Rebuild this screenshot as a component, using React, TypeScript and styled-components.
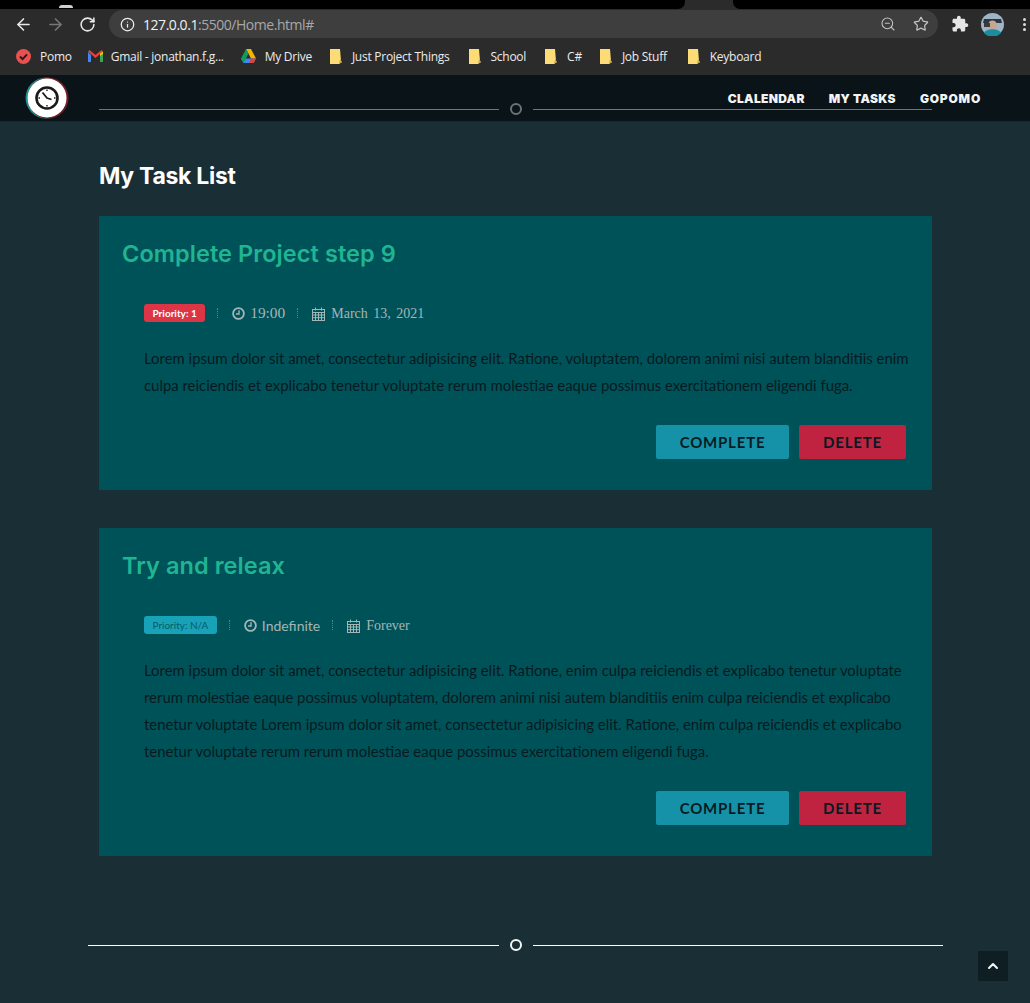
import React from "react";
import styled, { createGlobalStyle } from "styled-components";
import { ArrowLeft, ArrowRight, RotateCw, Info, ZoomOut, Star, ChevronUp } from "lucide-react";

const Global = createGlobalStyle`
  html, body { margin: 0; padding: 0; background: #1a2e35; }
  body { font-family: "Lato", sans-serif; }
  * { box-sizing: border-box; }
`;

const Page = styled.div`
  position: relative;
  width: 1030px;
  height: 1003px;
  overflow: hidden;
  background: #1a2e35;
`;

const TabStrip = styled.div`
  height: 9px;
  background: #2b2b2b;
  display: flex;
  gap: 48px;
`;
const InactiveTabs = styled.div<{ $side: "left" | "right" }>`
  background: #000;
  flex: ${(p) => (p.$side === "left" ? "0 0 685px" : "1")};
  border-radius: ${(p) => (p.$side === "left" ? "0 0 7px 0" : "0 0 0 7px")};
  padding: 5px 0 0 59px;
`;
const TabFavicon = styled.div`
  width: 14px;
  height: 3px;
  background: #d0d0d0;
  border-radius: 3px 3px 0 0;
`;

const Toolbar = styled.div`
  height: 30px;
  background: #2b2b2b;
  display: flex;
  align-items: center;
  padding-left: 13px;
`;
const NavIcon = styled.span<{ $dim?: boolean }>`
  width: 20px;
  height: 20px;
  display: flex;
  align-items: center;
  justify-content: center;
  margin-right: 12px;
  color: ${(p) => (p.$dim ? "#777" : "#e8e8e8")};
`;
const Omnibox = styled.div`
  width: 829px;
  height: 28px;
  border-radius: 14px;
  background: #3e3e3e;
  display: flex;
  align-items: center;
  padding: 0 9px 0 11px;
  font: 14px "Open Sans", sans-serif;
  color: #a8a8a8;
`;
const Url = styled.span`
  margin-left: 8px;
  flex: 1;
  white-space: nowrap;
  letter-spacing: -0.46px;
`;
const UrlHost = styled.span`
  color: #f0f0f0;
`;
const OmniAction = styled.span`
  display: flex;
  margin-left: 17px;
  color: #c4c4c4;
`;
const ExtIcon = styled.svg`
  margin-left: 13px;
  color: #e6e6e6;
`;
const Avatar = styled.svg`
  margin-left: 12px;
`;
const Kebab = styled.span`
  margin-left: 19px;
  display: flex;
  flex-direction: column;
  gap: 2px;
`;
const KebabDot = styled.i`
  width: 3px;
  height: 3px;
  border-radius: 50%;
  background: #dcdcdc;
`;

const Bookmarks = styled.div`
  height: 36px;
  background: #2b2b2b;
  display: flex;
  align-items: center;
  padding: 0 0 2px 16px;
  font: 12px "Open Sans", sans-serif;
  color: #ececec;
  letter-spacing: -0.26px;
`;
const Bookmark = styled.span<{ $gap: number; $after: number }>`
  display: flex;
  align-items: center;
  gap: ${(p) => p.$gap}px;
  margin-right: ${(p) => p.$after}px;
  white-space: nowrap;
`;

const Header = styled.header`
  position: relative;
  height: 47px;
  background: #0a1317;
  border-bottom: 1px solid #14282c;
  padding: 27px 98px 0 99px;
`;
const LogoMark = styled.svg`
  position: absolute;
  left: 25px;
  top: 1px;
`;
const Nav = styled.nav`
  position: absolute;
  top: 15px;
  right: 49px;
  display: flex;
  gap: 24px;
  font: 900 12px/17px "Inter", sans-serif;
  color: #f2f4f4;
  white-space: nowrap;
`;
const NavLink = styled.span<{ $track: number }>`
  letter-spacing: ${(p) => p.$track}px;
`;

const DividerRow = styled.div<{ $dim?: boolean }>`
  display: flex;
  align-items: center;
  height: 14px;
  opacity: ${(p) => (p.$dim ? 0.42 : 1)};
`;
const DividerLine = styled.span`
  flex: 1;
  height: 1px;
  background: #fff;
`;
const DividerRing = styled.span`
  width: 12px;
  height: 12px;
  margin: 0 11px;
  border-radius: 50%;
  border: 2px solid #f2f6f6;
`;

const Main = styled.main`
  padding: 38px 98px 0 99px;
`;
const PageTitle = styled.h1`
  margin: 0 0 24px;
  height: 32px;
  font: 650 23px/32px "Inter", sans-serif;
  letter-spacing: -0.3px;
  color: #fff;
`;
const Card = styled.article`
  background: #005259;
  padding: 22px 26px 31px 23px;
  margin-bottom: 38px;
`;
const CardTitle = styled.h2`
  margin: 0 0 33px;
  font: 620 23.5px/32px "Inter", sans-serif;
  letter-spacing: 0.08px;
  color: #20b592;
`;
const CardBody = styled.div`
  padding-left: 22px;
`;
const Meta = styled.div`
  display: flex;
  align-items: center;
  height: 20px;
  color: #a3b6b6;
  font-size: 14px;
`;
const Badge = styled.span<{ $tone: "red" | "info" }>`
  display: inline-flex;
  align-items: center;
  height: 18px;
  padding: 0 8.5px;
  border-radius: 3px;
  font: ${(p) => (p.$tone === "red" ? 700 : 400)} 10px "Lato", sans-serif;
  background: ${(p) => (p.$tone === "red" ? "#dc3545" : "#17a2b8")};
  color: ${(p) => (p.$tone === "red" ? "#fff" : "#075a68")};
`;
const Sep = styled.span`
  width: 0;
  height: 10px;
  margin: 0 14px 0 12px;
  border-left: 1px dotted #4d8a8d;
`;
const TimeItem = styled.span<{ $serif?: boolean }>`
  display: inline-flex;
  align-items: center;
  gap: 5px;
  font-family: ${(p) => (p.$serif ? '"Liberation Serif", serif' : '"Lato", sans-serif')};
  font-size: ${(p) => (p.$serif ? 15.4 : 14)}px;
`;
const DateItem = styled.span`
  display: inline-flex;
  align-items: center;
  gap: 6px;
  padding-top: 2px;
  font-family: "Liberation Serif", serif;
  word-spacing: 2px;
`;
const Body = styled.p`
  margin: 22px 0 0;
  font: 400 14.9px/27px "Lato", sans-serif;
  color: #071a20;
  white-space: nowrap;
`;
const Actions = styled.div`
  display: flex;
  justify-content: flex-end;
  gap: 10px;
  margin-top: 26px;
`;
const Button = styled.button<{ $kind: "done" | "del" }>`
  height: 34px;
  width: ${(p) => (p.$kind === "done" ? 133 : 107)}px;
  padding: 0;
  border: 0;
  border-radius: 2px;
  font: 700 15px "Lato", sans-serif;
  letter-spacing: 0.8px;
  color: #071a24;
  background: ${(p) => (p.$kind === "done" ? "#1592a8" : "#c0233f")};
`;

const Footer = styled.footer`
  padding: 44px 87px 0 88px;
`;
const ToTop = styled.a`
  position: absolute;
  left: 978px;
  top: 951px;
  width: 30px;
  height: 30px;
  display: flex;
  align-items: center;
  justify-content: center;
  background: #0f1e23;
  color: #f2f6f6;
`;

const Folder = () => (
  <svg width="12" height="15" viewBox="0 0 12 15">
    <path d="M0 0h10l1 12 1 1-3 2H0z" fill="#fddc78" />
    <path d="M10 10l1.800 3L9 15z" fill="#c9a94e" />
  </svg>
);

const ClockIcon = () => (
  <svg width="13" height="13" viewBox="0 0 13 13" fill="none" stroke="currentColor">
    <circle cx="6.500" cy="6.500" r="5.400" strokeWidth="1.800" />
    <path d="M7 3.200V7H4" strokeWidth="1.400" />
  </svg>
);

const CalendarIcon = () => (
  <svg width="13" height="14" viewBox="0 0 13 14" fill="none" stroke="currentColor" strokeWidth="1">
    <rect x="0.500" y="2.500" width="12" height="11" />
    <path d="M0.500 5.500h12M0.500 8h12M0.500 10.700h12M3.500 5.500v8M6.500 5.500v8M9.500 5.500v8M3.500 0.500v3M9.500 0.500v3" />
  </svg>
);

const tasks = [
  {
    title: "Complete Project step 9",
    tone: "red" as const,
    badge: "Priority: 1",
    timeSerif: true,
    time: "19:00",
    date: "March 13, 2021",
    lines: [
      "Lorem ipsum dolor sit amet, consectetur adipisicing elit. Ratione, voluptatem, dolorem animi nisi autem blanditiis enim",
      "culpa reiciendis et explicabo tenetur voluptate rerum molestiae eaque possimus exercitationem eligendi fuga.",
    ],
  },
  {
    title: "Try and releax",
    tone: "info" as const,
    badge: "Priority: N/A",
    timeSerif: false,
    time: "Indefinite",
    date: "Forever",
    lines: [
      "Lorem ipsum dolor sit amet, consectetur adipisicing elit. Ratione, enim culpa reiciendis et explicabo tenetur voluptate",
      "rerum molestiae eaque possimus voluptatem, dolorem animi nisi autem blanditiis enim culpa reiciendis et explicabo",
      "tenetur voluptate Lorem ipsum dolor sit amet, consectetur adipisicing elit. Ratione, enim culpa reiciendis et explicabo",
      "tenetur voluptate rerum rerum molestiae eaque possimus exercitationem eligendi fuga.",
    ],
  },
];

export default function App() {
  return (
    <Page>
      <Global />
      <TabStrip>
        <InactiveTabs $side="left"><TabFavicon /></InactiveTabs>
        <InactiveTabs $side="right" />
      </TabStrip>
      <Toolbar>
        <NavIcon><ArrowLeft size={19} strokeWidth={2} /></NavIcon>
        <NavIcon $dim><ArrowRight size={19} strokeWidth={2} /></NavIcon>
        <NavIcon><RotateCw size={17} strokeWidth={2.2} /></NavIcon>
        <Omnibox>
          <Info size={15} color="#f0f0f0" strokeWidth={2} />
          <Url><UrlHost>127.0.0.1</UrlHost>:5500/Home.html#</Url>
          <OmniAction><ZoomOut size={16} strokeWidth={1.6} /></OmniAction>
          <OmniAction><Star size={16} strokeWidth={1.8} /></OmniAction>
        </Omnibox>
        <ExtIcon width="18" height="18" viewBox="0 0 24 24" fill="currentColor">
          <path d="M20.500 11H19V7c0-1.100-.9-2-2-2h-4V3.500C13 2.120 11.880 1 10.500 1S8 2.120 8 3.500V5H4c-1.100 0-1.990.9-1.990 2v3.800H3.500c1.490 0 2.700 1.210 2.700 2.700s-1.210 2.700-2.700 2.700H2V20c0 1.100.9 2 2 2h3.800v-1.500c0-1.490 1.210-2.700 2.700-2.700 1.490 0 2.700 1.210 2.700 2.700V22H17c1.100 0 2-.9 2-2v-4h1.500c1.380 0 2.500-1.120 2.500-2.500S21.880 11 20.500 11z" />
        </ExtIcon>
        <Avatar width="23" height="23" viewBox="0 0 23 23">
          <circle cx="11.500" cy="11.500" r="11.500" fill="#9fb4c4" />
          <path d="M3 6h17l1 4H2z" fill="#2c3540" />
          <circle cx="11.500" cy="12" r="4.500" fill="#c6a691" />
          <path d="M3 20c2-5 15-5 17 0a11.500 11.500 0 0 1-17 0z" fill="#1c8d9f" />
          <rect x="3" y="10" width="6" height="4" fill="#3a3a3a" />
        </Avatar>
        <Kebab><KebabDot /><KebabDot /><KebabDot /></Kebab>
      </Toolbar>
      <Bookmarks>
        <Bookmark $gap={9} $after={16}>
          <svg width="15" height="15" viewBox="0 0 15 15">
            <circle cx="7.500" cy="7.500" r="7.500" fill="#e8514f" />
            <path d="M4 7.500l2.600 2.600L11 5.400" fill="none" stroke="#2a1a1a" strokeWidth="2" />
          </svg>
          Pomo
        </Bookmark>
        <Bookmark $gap={8} $after={17}>
          <svg width="15" height="12" viewBox="0 0 15 12">
            <path d="M0 2v10h3V5z" fill="#4285f4" />
            <path d="M15 2v10h-3V5z" fill="#34a853" />
            <path d="M0 1.500 1.500 0 7.500 5 13.500 0 15 1.500 7.500 8z" fill="#ea4335" />
            <path d="M12 3.500 15 1.500V4l-3 2z" fill="#fbbc04" />
          </svg>
          Gmail - jonathan.f.g...
        </Bookmark>
        <Bookmark $gap={9} $after={18}>
          <svg width="15" height="14" viewBox="0 0 15 14">
            <path d="M5 0h5l5 9.500h-5z" fill="#f4b400" />
            <path d="M0 9.500h15L12.500 14h-10z" fill="#4285f4" />
            <path d="M5 0 7.500 4.500 2.600 14 0 9.500z" fill="#0f9d58" />
            <path d="M10 9.500h5L12.500 14H8z" fill="#db4437" />
          </svg>
          My Drive
        </Bookmark>
        <Bookmark $gap={10} $after={19}><Folder />Just Project Things</Bookmark>
        <Bookmark $gap={10} $after={19}><Folder />School</Bookmark>
        <Bookmark $gap={10} $after={18}><Folder />C#</Bookmark>
        <Bookmark $gap={10} $after={21}><Folder />Job Stuff</Bookmark>
        <Bookmark $gap={10} $after={0}><Folder />Keyboard</Bookmark>
      </Bookmarks>
      <Header>
        <DividerRow $dim>
          <DividerLine />
          <DividerRing />
          <DividerLine />
        </DividerRow>
        <LogoMark width="44" height="44" viewBox="0 0 44 44">
          <circle cx="21" cy="22" r="20.500" fill="#1c8f90" />
          <circle cx="23" cy="22" r="20.500" fill="#6e1f24" />
          <circle cx="22" cy="22" r="19.500" fill="#fff" />
          <circle cx="22" cy="22" r="10.500" fill="none" stroke="#1a1a1a" strokeWidth="2.600" />
          <path d="M17.500 16.500 22 22 26.500 23.500" stroke="#1a1a1a" strokeWidth="1.800" fill="none" />
          <path d="M22 13.500v1.500M22 29v1.500M13.500 22h1.500M29 22h1.500" stroke="#1a1a1a" strokeWidth="1.400" />
        </LogoMark>
        <Nav>
          <NavLink $track={0.32}>CLALENDAR</NavLink>
          <NavLink $track={0.32}>MY TASKS</NavLink>
          <NavLink $track={0.8}>GOPOMO</NavLink>
        </Nav>
      </Header>
      <Main>
        <PageTitle>My Task List</PageTitle>
        {tasks.map((t) => (
          <Card key={t.title}>
            <CardTitle>{t.title}</CardTitle>
            <CardBody>
              <Meta>
                <Badge $tone={t.tone}>{t.badge}</Badge>
                <Sep />
                <TimeItem $serif={t.timeSerif}><ClockIcon />{t.time}</TimeItem>
                <Sep />
                <DateItem><CalendarIcon />{t.date}</DateItem>
              </Meta>
              <Body>
                {t.lines.map((l) => (
                  <React.Fragment key={l}>{l}<br /></React.Fragment>
                ))}
              </Body>
              <Actions>
                <Button $kind="done">COMPLETE</Button>
                <Button $kind="del">DELETE</Button>
              </Actions>
            </CardBody>
          </Card>
        ))}
      </Main>
      <Footer>
        <DividerRow>
          <DividerLine />
          <DividerRing />
          <DividerLine />
        </DividerRow>
      </Footer>
      <ToTop><ChevronUp size={16} strokeWidth={3} /></ToTop>
    </Page>
  );
}
